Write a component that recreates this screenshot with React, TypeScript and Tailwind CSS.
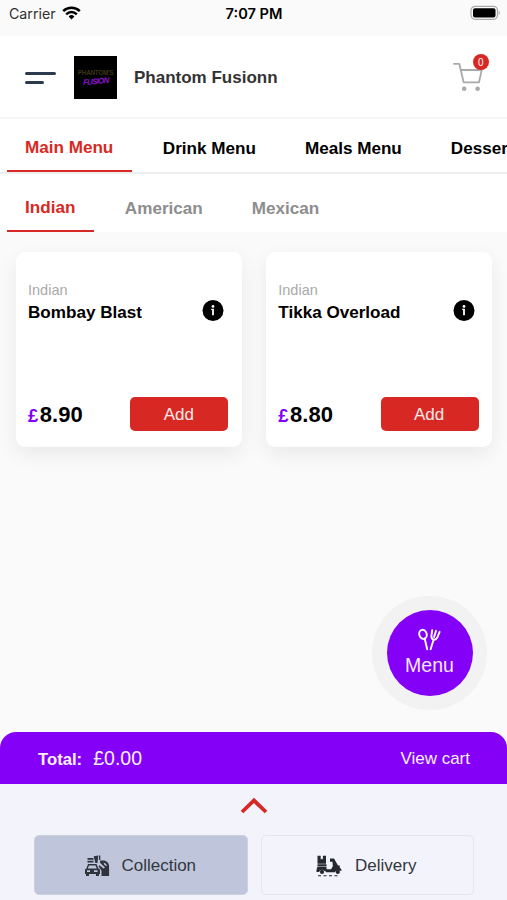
import React from "react";

const MAIN_TABS = ["Main Menu", "Drink Menu", "Meals Menu", "Desser"];
const SUB_TABS = ["Indian", "American", "Mexican"];
const ITEMS = [
  { name: "Bombay Blast", category: "Indian", price: "8.90" },
  { name: "Tikka Overload", category: "Indian", price: "8.80" },
];

function StatusBar() {
  return (
    <div className="grid h-9 shrink-0 grid-cols-3 items-start bg-[#fafafa] pr-[6px] pl-[9px] font-['Inter',sans-serif] text-[14px] leading-5">
      <div className="flex gap-[6px] pt-1 text-[#303030]">
        <span className="text-[14.2px]">Carrier</span>
        <svg className="mt-[2px] h-[14px] w-[19px]" viewBox="0 0 19 14" fill="none" stroke="#000" strokeWidth="2.5">
          <path d="M1.2 5.1a11.8 11.8 0 0 1 16.6 0" />
          <path d="M4.2 8.3a7.5 7.5 0 0 1 10.6 0" />
          <path d="M6.6 10.4a4.1 4.1 0 0 1 5.8 0L9.5 13.5Z" fill="#000" stroke="none" />
        </svg>
      </div>
      <div className="pt-1 pr-[2px] text-center text-[14.6px] font-semibold text-black">7:07 PM</div>
      <svg className="mt-[5px] h-4 w-[31px] justify-self-end" viewBox="0 0 31 16">
        <rect x="1" y="1.3" width="26.5" height="13" rx="4" fill="#fafafa" stroke="#aaa" strokeWidth="1.2" />
        <rect x="3" y="3.2" width="22.5" height="9.3" rx="2" fill="#000" />
        <path d="M28.7 5.5q2.3 2.3 0 4.6Z" fill="#aaa" />
      </svg>
    </div>
  );
}

function Logo() {
  return (
    <div className="flex h-[43px] w-[43px] flex-col items-center justify-center bg-black">
      <span className="text-[6.4px] leading-[7px] font-bold tracking-[-0.3px] text-[#3d3414]">PHANTOM'S</span>
      <span className="mt-[2px] -skew-y-6 text-[8px] leading-[8px] font-bold tracking-[-0.8px] text-[#8b12c9] italic">FUSION</span>
    </div>
  );
}

function Header() {
  return (
    <header className="flex h-[83px] shrink-0 items-center border-b-2 border-[#f6f6f6] pt-[2px] pr-[18px] pl-[25px]">
      <div className="flex w-[49px] flex-col gap-[6px]">
        <span className="h-[3px] w-[31px] rounded-full bg-[#2b3a4d]" />
        <span className="h-[3px] w-[19px] rounded-full bg-[#2b3a4d]" />
      </div>
      <Logo />
      <h1 className="ml-[17px] flex-1 text-[17px] leading-5 font-bold text-[#333]">Phantom Fusionn</h1>
      <div className="relative mb-[9px] h-[38px] w-9">
        <svg className="absolute top-[8px] left-0 h-[30px] w-[32px]" viewBox="0 0 32 30" fill="none" stroke="#aaa" strokeWidth="1.8" strokeLinecap="round" strokeLinejoin="round">
          <path d="M1 1.8H6.3L10.6 20.3H26L28.7 8H8" />
          <circle cx="11.2" cy="26.8" r="2.3" fill="#aaa" stroke="none" />
          <circle cx="24.6" cy="26.8" r="2.3" fill="#aaa" stroke="none" />
        </svg>
        <span className="absolute top-0 left-5 flex h-[15.5px] w-[15.5px] items-center justify-center rounded-full bg-[#d82823] pt-[2px] text-[10px] leading-none text-white">0</span>
      </div>
    </header>
  );
}

function Tabs({ labels, secondary = false }: { labels: string[]; secondary?: boolean }) {
  return (
    <nav className={secondary ? "flex h-[58px] shrink-0 gap-[13px] overflow-hidden bg-white pl-[7px]" : "flex h-[55px] shrink-0 gap-[13px] overflow-hidden border-b-2 border-[#eee] bg-white pl-[7px]"}>
      {labels.map((label, i) => (
        <div
          key={label}
          className={[
            "shrink-0 pl-[18px] text-[17.1px] leading-5 font-bold whitespace-nowrap",
            !secondary && i === labels.length - 1 ? "pr-0" : i === 0 ? "pr-[18.5px]" : "pr-[18px]",
            secondary ? "pt-6" : "pt-[19px]",
            i === 0
              ? "border-b-[2.5px] border-[#d82823] text-[#d82823]"
              : secondary
                ? "translate-y-px text-[#8d8d8d]"
                : "translate-y-px text-black",
          ].join(" ")}
        >
          {label}
        </div>
      ))}
    </nav>
  );
}

function Card({ item }: { item: (typeof ITEMS)[number] }) {
  return (
    <article className="flex h-[195px] flex-col rounded-[9px] bg-white pr-[13.5px] pb-4 pl-3 shadow-[0_7px_20px_rgba(0,0,0,0.07)]">
      <p className="mt-[29px] text-[14.5px] leading-[18px] text-[#aaa]">{item.category}</p>
      <div className="flex items-start justify-between pr-1">
        <h2 className="pt-[4px] text-[17.1px] leading-5 font-bold text-black">{item.name}</h2>
        <svg className="h-[22px] w-[22px]" viewBox="0 0 22 22">
          <circle cx="11" cy="11.5" r="10.5" fill="#000" />
          <circle cx="11" cy="7.4" r="1.4" fill="#fff" />
          <path d="M9.2 9.7h2.7v6.6h-1.8v-5.3h-.9z" fill="#fff" />
        </svg>
      </div>
      <div className="mt-auto flex items-center justify-between">
        <div className="flex items-baseline pt-[3px] font-bold">
          <span className="mr-[1.5px] text-[18.5px] text-[#8400f7]">£</span>
          <span className="text-[22px] leading-6 text-black">{item.price}</span>
        </div>
        <button className="h-[34px] w-[98px] rounded-[5px] bg-[#d82823] pt-px pr-[1px] text-[17px] leading-5 text-[#fbe9e8]">Add</button>
      </div>
    </article>
  );
}

function MenuButton() {
  return (
    <button className="absolute top-[364px] left-[372px] flex h-[114px] w-[115px] items-center justify-center rounded-full bg-[#f2f2f2]">
      <span className="flex h-[86px] w-[86px] flex-col items-center rounded-full bg-[#8400f7] pt-[18px] text-[19.5px] leading-[22px] text-[#f5e8ff]">
        <svg className="h-[26px] w-6 shrink-0" viewBox="0 0 24 26" fill="none" stroke="#fff" strokeWidth="1.9" strokeLinecap="round">
          <ellipse cx="5" cy="6.3" rx="3.7" ry="4.6" transform="rotate(-16 5 6.3)" />
          <path d="M6.8 11 9.2 21.3M12.6 21.3l3-9.6" />
          <path d="M14.2 2.2 13.4 7.8q-.2 3.3 2.2 3.9 2.4.5 3.9-2.6L21.6 3.8M18 2.8 16.1 9" />
        </svg>
        Menu
      </span>
    </button>
  );
}

function CollectionIcon() {
  return (
    <svg className="h-[22px] w-[26px]" viewBox="0 0 26 22" fill="#30343d">
      <path d="M3.5 3h6v1.8h-6zM3.5 5.7h6v1.8h-6zM9.7 1.3l4.6-.7-.8 7.4h-2.2zM15 .5h1.3V5H15z" />
      <path fillRule="evenodd" d="M4 9h8.5l2 4.5 1.5 1V19h-1v2h-3v-2H5v2H2v-2H1v-4.5l1.4-1zm1 1.5-1.2 3h9l-1.3-3zM3 15.3v1.8h3v-1.8zm7 0v1.8h3.5v-1.8z" />
      <path fillRule="evenodd" d="M16 5.6h4.5q4.6 1.6 4.6 6V21h-7.6v-5.2l-3-4.6 1-1 4 3.2 1.5-1L16.2 8zm3.5 2 .9 2.4 2.8 1.2q-.6-2.8-3.7-3.6z" />
    </svg>
  );
}

function DeliveryIcon() {
  return (
    <svg className="h-[22px] w-[26px]" viewBox="0 0 26 22" fill="#25282e">
      <path d="M1.5.8h3.2v3.8l1.1-.8 1.1.8V.8H10v8H1.5zM1.5 9.3h9v1.7h-9zM1.5 11.6h9v4.6H8.9a3.2 3.2 0 0 0-5.8.8H.5v-2.3zM14 3.5h4l4 7h1.8v2.2q1.7 1 1.9 3h-1.9a3.2 3.2 0 0 0-4.8 1.6H9.8v-3h5.3l1.7-3-.3-4.5H14z" />
      <circle cx="6" cy="16.9" r="2.1" />
      <circle cx="21.8" cy="16.9" r="2.1" />
      <path d="M2 20.2h3v1H2zM7.5 20.2h3v1h-3zM13 20.2h3v1h-3zM18.5 20.2h3v1h-3z" />
    </svg>
  );
}

export default function App() {
  return (
    <div className="flex h-[900px] w-[507px] flex-col overflow-hidden bg-white font-['Liberation_Sans',Arial,sans-serif]">
      <StatusBar />
      <Header />
      <Tabs labels={MAIN_TABS} />
      <Tabs labels={SUB_TABS} secondary />
      <main className="relative flex-1 bg-[#fafafa]">
        <div className="grid grid-cols-2 gap-[24.5px] pt-5 pr-[15px] pl-4">
          {ITEMS.map((item) => (
            <Card key={item.name} item={item} />
          ))}
        </div>
        <MenuButton />
      </main>
      <div className="shrink-0 bg-[#fafafa]">
        <div className="flex h-[52px] items-center justify-between rounded-t-[16px] bg-[#8400f7] pt-[2px] pr-[37px] pl-[38px] text-[#faf0ff]">
          <div className="flex items-baseline gap-[11px]">
            <span className="text-[16.7px] font-bold">Total:</span>
            <span className="text-[19.5px] leading-6">£0.00</span>
          </div>
          <span className="text-[17px] leading-5">View cart</span>
        </div>
      </div>
      <footer className="h-[116px] shrink-0 bg-[#f2f3fb]">
        <div className="flex h-[51px] justify-center pt-[12px]">
          <svg className="h-[18px] w-[28px]" viewBox="0 0 28 18" fill="none" stroke="#d82823" strokeWidth="3.8">
            <path d="M2 16 14 4.5 26 16" />
          </svg>
        </div>
        <div className="grid grid-cols-2 gap-[13px] pr-[33px] pl-[34px] text-[17px] leading-5 text-[#33373d]">
          <button className="flex h-[60px] items-center justify-center gap-[11px] rounded-[5px] border border-[#cdd1dc] bg-[#bfc6dc] pt-px pr-px">
            <CollectionIcon />
            Collection
          </button>
          <button className="flex h-[60px] items-center justify-center gap-[13px] rounded-[5px] border border-[#e6e6ea] pt-px pr-[2px]">
            <DeliveryIcon />
            Delivery
          </button>
        </div>
      </footer>
    </div>
  );
}
